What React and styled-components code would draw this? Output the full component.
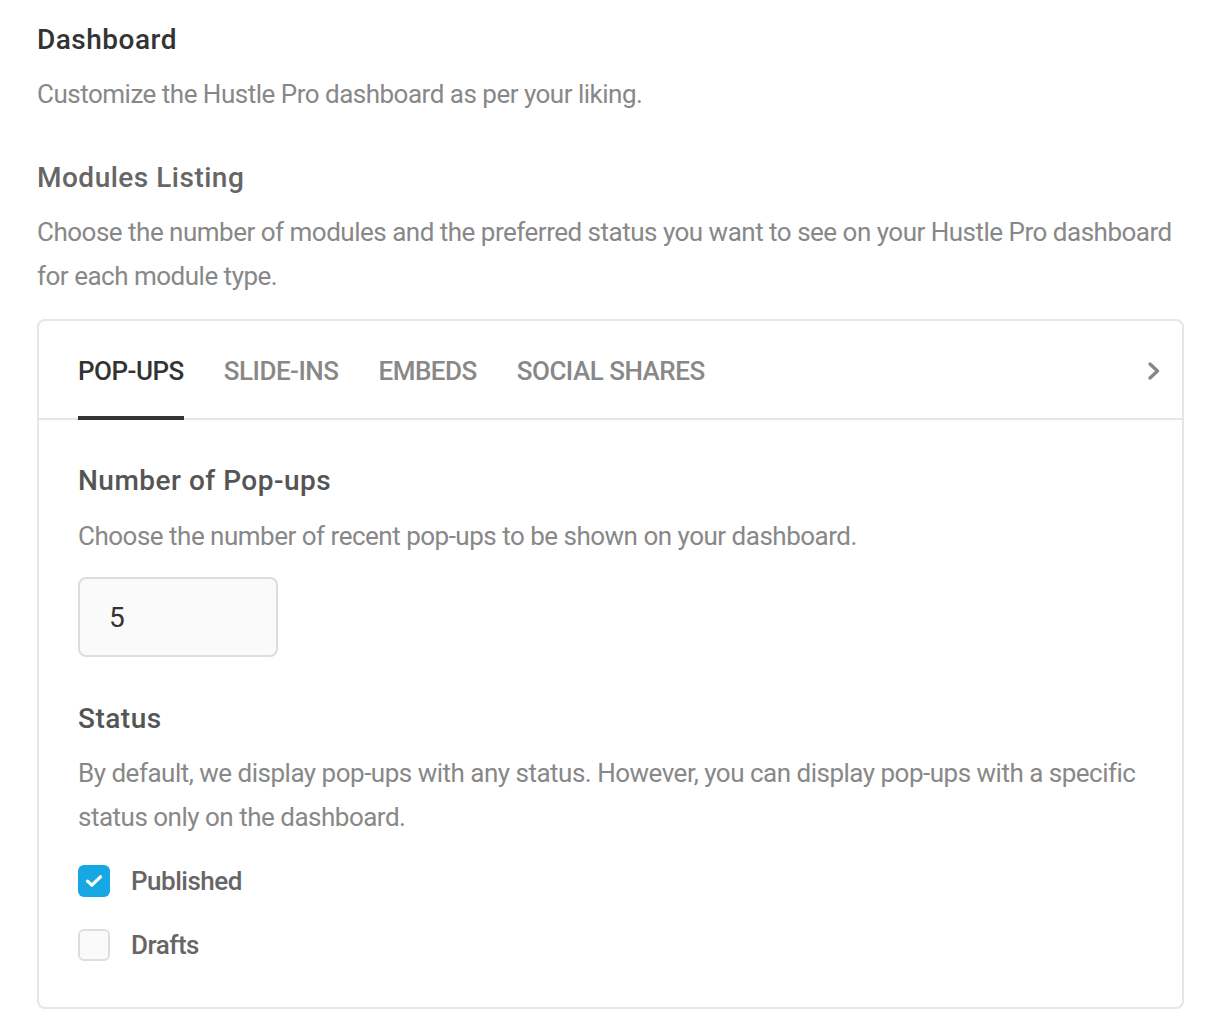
import React from "react";
import styled, { createGlobalStyle } from "styled-components";

const Global = createGlobalStyle`
  html, body { margin: 0; padding: 0; background: #fff; }
  body { font-family: Roboto, "Liberation Sans", Arial, sans-serif; -webkit-font-smoothing: antialiased; }
  * { box-sizing: border-box; }
`;

const Page = styled.div`
  padding: 20px 36px 20px 37px;
  width: 1220px;
`;

const Title = styled.h1`
  margin: 0;
  font-size: 28px;
  line-height: 40px;
  font-weight: 500;
  letter-spacing: 0.5px;
  color: ${(p) => p.$color || "#333"};
  margin-top: ${(p) => p.$mt || 0}px;
`;

const Text = styled.p`
  margin: ${(p) => p.$mt || 0}px 0 0;
  font-size: 26px;
  line-height: 44px;
  letter-spacing: -0.5px;
  color: #888;
  font-weight: 400;
`;

const Box = styled.div`
  margin-top: 21px;
  border: 2px solid #e6e6e6;
  border-radius: 8px;
`;

const TabBar = styled.div`
  display: flex;
  align-items: stretch;
  height: 99px;
  border-bottom: 2px solid #e6e6e6;
  padding: 0 20px 0 39px;
`;

const Tabs = styled.div`
  display: flex;
  gap: 40px;
  flex: 1;
`;

const Tab = styled.div`
  position: relative;
  display: flex;
  align-items: center;
  font-size: 26px;
  font-weight: 500;
  text-transform: uppercase;
  letter-spacing: -0.5px;
  color: ${(p) => (p.$active ? "#333" : "#888")};
  padding-top: 3px;
  &::after {
    content: "";
    position: absolute;
    left: 0;
    right: 0;
    bottom: -2px;
    height: 4px;
    background: ${(p) => (p.$active ? "#333" : "transparent")};
  }
`;

const Arrow = styled.div`
  display: flex;
  align-items: center;
  padding-top: 3px;
`;

const Content = styled.div`
  padding: 41px 39px 46px;
`;

const NumberInput = styled.div`
  margin-top: 19px;
  width: 200px;
  height: 80px;
  border: 2px solid #ddd;
  border-radius: 8px;
  background: #fafafa;
  display: flex;
  align-items: center;
  padding-left: 29px;
  font-size: 28px;
  color: #333;
  font-weight: 400;
`;

const Checks = styled.div`
  margin-top: 26px;
  display: flex;
  flex-direction: column;
  gap: 32px;
`;

const CheckRow = styled.label`
  display: flex;
  align-items: center;
  gap: 21px;
  font-size: 26px;
  line-height: 32px;
  font-weight: 500;
  letter-spacing: -0.5px;
  color: #666;
`;

const CheckBox = styled.span`
  width: 32px;
  height: 32px;
  border-radius: 6px;
  display: flex;
  align-items: center;
  justify-content: center;
  background: ${(p) => (p.$checked ? "#17a8e3" : "#fafafa")};
  border: ${(p) => (p.$checked ? "none" : "2px solid #ddd")};
`;

const tabs = ["Pop-ups", "Slide-ins", "Embeds", "Social Shares"];

export default function App() {
  return (
    <>
      <Global />
      <Page>
        <Title>Dashboard</Title>
        <Text $mt={12}>Customize the Hustle Pro dashboard as per your liking.</Text>
        <Title $color="#666" $mt={42}>Modules Listing</Title>
        <Text $mt={12}>
          Choose the number of modules and the preferred status you want to see on your Hustle Pro dashboard
          for each module type.
        </Text>
        <Box>
          <TabBar>
            <Tabs>
              {tabs.map((t, i) => (
                <Tab key={t} $active={i === 0}>{t}</Tab>
              ))}
            </Tabs>
            <Arrow>
              <svg width="16" height="20" viewBox="0 0 16 20">
                <path d="M4 3 L11.5 10 L4 17" fill="none" stroke="#888" strokeWidth="3.4" strokeLinecap="round" strokeLinejoin="round" />
              </svg>
            </Arrow>
          </TabBar>
          <Content>
            <Title $color="#555">Number of Pop-ups</Title>
            <Text $mt={13}>Choose the number of recent pop-ups to be shown on your dashboard.</Text>
            <NumberInput>5</NumberInput>
            <Title $color="#555" $mt={42}>Status</Title>
            <Text $mt={12}>
              By default, we display pop-ups with any status. However, you can display pop-ups with a specific
              status only on the dashboard.
            </Text>
            <Checks>
              <CheckRow>
                <CheckBox $checked>
                  <svg width="18" height="14" viewBox="0 0 18 14">
                    <path d="M2.5 7.2 L6.8 11.2 L15.5 2.8" fill="none" stroke="#fff" strokeWidth="3.2" strokeLinecap="round" strokeLinejoin="round" />
                  </svg>
                </CheckBox>
                Published
              </CheckRow>
              <CheckRow>
                <CheckBox />
                Drafts
              </CheckRow>
            </Checks>
          </Content>
        </Box>
      </Page>
    </>
  );
}
